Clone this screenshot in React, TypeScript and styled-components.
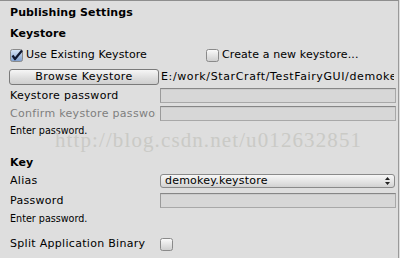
import React from "react";
import styled, { createGlobalStyle } from "styled-components";

const Global = createGlobalStyle`
  html, body { margin: 0; padding: 0; background: #dedede; }
  body { width: 400px; height: 258px; overflow: hidden; }
`;

const Panel = styled.div`
  position: relative;
  box-sizing: border-box;
  width: 399px;
  height: 258px;
  border-top: 1px solid #8e8e8e;
  border-right: 1px solid #9a9a9a;
  background: #dedede;
  padding-left: 10px;
  font-family: "DejaVu Sans", sans-serif;
  font-size: 11px;
  color: #000;
  display: flex;
  flex-direction: column;
`;

const Row = styled.div<{ $top: number; $h: number }>`
  display: flex;
  align-items: center;
  margin-top: ${(p) => p.$top}px;
  height: ${(p) => p.$h}px;
  line-height: ${(p) => p.$h}px;
  white-space: nowrap;
`;

const Heading = styled.div<{ $top: number }>`
  margin-top: ${(p) => p.$top}px;
  height: 16px;
  line-height: 16px;
  font-weight: bold;
  font-size: 11px;
  letter-spacing: 0.1px;
`;

const Help = styled.div<{ $top: number }>`
  margin-top: ${(p) => p.$top}px;
  height: 12px;
  line-height: 12px;
  font-size: 9.6px;
`;

const Label = styled.div<{ $dim?: boolean }>`
  width: 146px;
  margin-right: 4px;
  overflow: hidden;
  white-space: nowrap;
  letter-spacing: 0.3px;
  color: ${(p) => (p.$dim ? "#7f7f7f" : "#000")};
`;

const Field = styled.div<{ $h: number }>`
  box-sizing: border-box;
  width: 236px;
  height: ${(p) => p.$h}px;
  background: #d7d7d7;
  border: 1px solid #a8a8a8;
  border-top-color: #868686;
  border-left-color: #9a9a9a;
  box-shadow: inset 0 1px 0 #cbcbcb;
`;

const Toggle = styled.label<{ $w?: number }>`
  display: flex;
  align-items: center;
  gap: 2px;
  letter-spacing: 0.1px;
  ${(p) => (p.$w ? `width: ${p.$w}px;` : "")}
`;

const Button = styled.div`
  box-sizing: border-box;
  width: 150px;
  height: 16px;
  margin-left: -1px;
  margin-right: 2px;
  border: 1px solid #7a7a7a;
  border-radius: 3px;
  background: linear-gradient(#f6f6f6, #dcdcdc 60%, #cfcfcf);
  text-align: center;
  line-height: 14px;
  letter-spacing: 0.4px;
`;

const PathText = styled.div`
  width: 233px;
  overflow: hidden;
  white-space: nowrap;
  letter-spacing: 0.62px;
`;

const Dropdown = styled.div`
  box-sizing: border-box;
  width: 235px;
  height: 14px;
  border: 1px solid #8a8a8a;
  border-radius: 3px;
  background: linear-gradient(#f7f7f7, #e2e2e2 60%, #d2d2d2);
  display: flex;
  align-items: center;
  justify-content: space-between;
  padding: 0 4px 0 4px;
  line-height: 12px;
  letter-spacing: 0.2px;
`;

const Watermark = styled.div`
  position: absolute;
  left: 55px;
  top: 129px;
  font-family: "Liberation Serif", serif;
  font-size: 21px;
  line-height: 21px;
  letter-spacing: 1.1px;
  color: #cacac6;
  pointer-events: none;
  white-space: nowrap;
`;

const CheckBox: React.FC<{ checked?: boolean }> = ({ checked }) => (
  <svg width="14" height="13" viewBox="0 0 14 13">
    <defs>
      <linearGradient id={checked ? "cbOn" : "cbOff"} x1="0" y1="0" x2="0" y2="1">
        {checked ? (
          <>
            <stop offset="0" stopColor="#d9e6f6" />
            <stop offset="1" stopColor="#7f9fce" />
          </>
        ) : (
          <>
            <stop offset="0" stopColor="#fbfbfb" />
            <stop offset="1" stopColor="#cdcdcd" />
          </>
        )}
      </linearGradient>
    </defs>
    <rect x="0.5" y="0.5" width="12" height="12" rx="2" fill={`url(#${checked ? "cbOn" : "cbOff"})`} stroke="#8a8a8a" />
    {checked && (
      <path d="M2.5 6.5 L5 10 L12 1.5" fill="none" stroke="#101830" strokeWidth="2.2" strokeLinejoin="round" />
    )}
  </svg>
);

const Arrows = () => (
  <svg width="5" height="8" viewBox="0 0 5 8">
    <path d="M2.5 0 L5 3 L0 3 Z M0 5 L5 5 L2.5 8 Z" fill="#222" />
  </svg>
);

export default function App() {
  return (
    <>
      <Global />
      <Panel>
        <Heading $top={4}>Publishing Settings</Heading>
        <Heading $top={5}>Keystore</Heading>
        <Row $top={6} $h={14}>
          <Toggle $w={196}>
            <CheckBox checked />
            <span>Use Existing Keystore</span>
          </Toggle>
          <Toggle>
            <CheckBox />
            <span>Create a new keystore...</span>
          </Toggle>
        </Row>
        <Row $top={7} $h={16}>
          <Button>Browse Keystore</Button>
          <PathText>E:/work/StarCraft/TestFairyGUI/demokey.keystore</PathText>
        </Row>
        <Row $top={3} $h={15}>
          <Label>Keystore password</Label>
          <Field $h={15} />
        </Row>
        <Row $top={3} $h={15}>
          <Label $dim>Confirm keystore password</Label>
          <Field $h={15} />
        </Row>
        <Help $top={4}>Enter password.</Help>
        <Heading $top={18}>Key</Heading>
        <Row $top={3} $h={14}>
          <Label>Alias</Label>
          <Dropdown>
            <span>demokey.keystore</span>
            <Arrows />
          </Dropdown>
        </Row>
        <Row $top={5} $h={15}>
          <Label>Password</Label>
          <Field $h={15} />
        </Row>
        <Help $top={5}>Enter password.</Help>
        <Row $top={12} $h={14}>
          <Label>Split Application Binary</Label>
          <CheckBox />
        </Row>
        <Watermark>http://blog.csdn.net/u012632851</Watermark>
      </Panel>
    </>
  );
}
